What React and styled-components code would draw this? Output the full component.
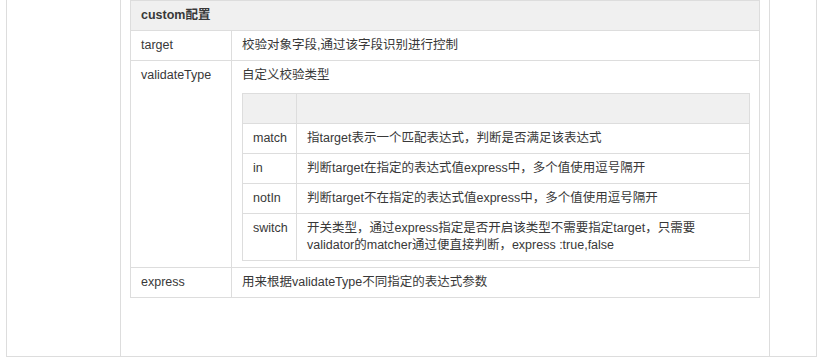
import React from "react";
import styled, { createGlobalStyle } from "styled-components";

const GlobalStyle = createGlobalStyle`
  html, body {
    margin: 0;
    padding: 0;
    background: #fff;
  }
  body {
    font-family: "Liberation Sans", Arial, "Noto Sans CJK SC", sans-serif;
    font-size: 12.5px;
    color: #333;
  }
`;

/* Outer three-column page frame (side nav | content | right rail) */
const Frame = styled.div`
  display: grid;
  grid-template-columns: 114px 649px 46px;
  margin-left: 6px;
  width: max-content;
  border: 1px solid #ddd;
  border-top: none;
`;

const SideColumn = styled.div`
  border-right: ${(p) => (p.$divider ? "1px solid #ddd" : "none")};
`;

const ContentColumn = styled.div`
  border-right: 1px solid #ddd;
  padding: 0 9px 58px;
`;

const Table = styled.table`
  border-collapse: collapse;
  table-layout: fixed;
  width: ${(p) => p.$width}px;
  font-size: 12.5px;
  line-height: 17px;
  color: #383838;
`;

const HeadCell = styled.th`
  background: #f0f0f0;
  border: 1px solid #ddd;
  padding: 6px 10px;
  text-align: left;
  font-weight: ${(p) => (p.$bold ? 700 : 400)};
  vertical-align: top;
`;

const Cell = styled.td`
  border: 1px solid #ddd;
  padding: 6px 10px;
  text-align: left;
  vertical-align: top;
`;

const Desc = styled.div`
  margin-bottom: 9px;
`;

const matchRows = [
  { key: "match", text: "指target表示一个匹配表达式，判断是否满足该表达式" },
  { key: "in", text: "判断target在指定的表达式值express中，多个值使用逗号隔开" },
  { key: "notIn", text: "判断target不在指定的表达式值express中，多个值使用逗号隔开" },
  {
    key: "switch",
    text: (
      <>
        开关类型，通过express指定是否开启该类型不需要指定target，只需要
        <br />
        validator的matcher通过便直接判断，express :true,false
      </>
    ),
  },
];

function ValidateTypeTable() {
  return (
    <Table $width={508}>
      <colgroup>
        <col style={{ width: 54 }} />
        <col />
      </colgroup>
      <thead>
        <tr>
          <HeadCell>&nbsp;</HeadCell>
          <HeadCell>&nbsp;</HeadCell>
        </tr>
      </thead>
      <tbody>
        {matchRows.map((r) => (
          <tr key={r.key}>
            <Cell>{r.key}</Cell>
            <Cell>{r.text}</Cell>
          </tr>
        ))}
      </tbody>
    </Table>
  );
}

export default function App() {
  return (
    <>
      <GlobalStyle />
      <Frame>
        <SideColumn $divider />
        <ContentColumn>
          <Table $width={630}>
            <colgroup>
              <col style={{ width: 101 }} />
              <col />
            </colgroup>
            <thead>
              <tr>
                <HeadCell colSpan={2} $bold>
                  custom配置
                </HeadCell>
              </tr>
            </thead>
            <tbody>
              <tr>
                <Cell>target</Cell>
                <Cell>校验对象字段,通过该字段识别进行控制</Cell>
              </tr>
              <tr>
                <Cell>validateType</Cell>
                <Cell>
                  <Desc>自定义校验类型</Desc>
                  <ValidateTypeTable />
                </Cell>
              </tr>
              <tr>
                <Cell>express</Cell>
                <Cell>用来根据validateType不同指定的表达式参数</Cell>
              </tr>
            </tbody>
          </Table>
        </ContentColumn>
        <SideColumn />
      </Frame>
    </>
  );
}
